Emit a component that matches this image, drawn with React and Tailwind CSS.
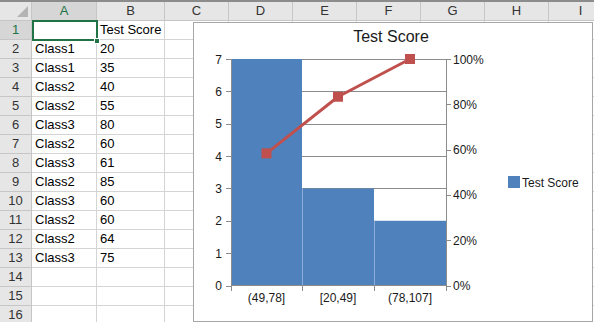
import React from "react";

const rows = [
  ["", "Test Score"],
  ["Class1", "20"],
  ["Class1", "35"],
  ["Class2", "40"],
  ["Class2", "55"],
  ["Class3", "80"],
  ["Class2", "60"],
  ["Class3", "61"],
  ["Class2", "85"],
  ["Class3", "60"],
  ["Class2", "60"],
  ["Class2", "64"],
  ["Class3", "75"],
  ["", ""],
  ["", ""],
  ["", ""],
];

const cols = ["A", "B", "C", "D", "E", "F", "G", "H", "I"];
const widths = ["w-[65px]", "w-[68px]", "w-[64px]", "w-[64px]", "w-[64px]", "w-[64px]", "w-[64px]", "w-[64px]", "w-[64px]"];

const Y0 = 285.5;
const UNIT = 226.5 / 7;
const yv = (v) => Y0 - v * UNIT;
const yp = (p) => Y0 - (p / 100) * 226.5;

function Chart() {
  const bars = [
    { x0: 231, x1: 302, v: 7, label: "(49,78]" },
    { x0: 302, x1: 374, v: 3, label: "[20,49]" },
    { x0: 374, x1: 446, v: 2, label: "(78,107]" },
  ];
  const pts = [
    [266.5, yp((7 / 12) * 100)],
    [338, yp((10 / 12) * 100)],
    [410, yp(100)],
  ];
  const font = "'Liberation Sans', Arial, sans-serif";
  return (
    <div className="absolute left-[193px] top-[22px] w-[400px] h-[300px] border border-[#a6a6a6] bg-white">
      <svg width="398" height="298" className="block">
        <g transform="translate(-194,-23)" fontFamily={font}>
          <text x="391" y="42" fontSize="16" textAnchor="middle" fill="#1a1a1a">Test Score</text>
          {[1, 2, 3, 4, 5, 6, 7].map((k) => (
            <line key={k} x1="231" x2="446" y1={Math.round(yv(k)) + 0.5} y2={Math.round(yv(k)) + 0.5} stroke="#8c8c8c" />
          ))}
          {bars.map((b, i) => (
            <rect key={i} x={b.x0} y={yv(b.v)} width={b.x1 - b.x0} height={Y0 - yv(b.v)} fill="#4f81bd" />
          ))}
          <line x1="302.5" x2="302.5" y1={yv(3)} y2={Y0} stroke="#8eaad6" />
          <line x1="374.5" x2="374.5" y1={yv(2)} y2={Y0} stroke="#8eaad6" />
          <line x1="231.5" x2="231.5" y1="59" y2="286" stroke="#8c8c8c" />
          <line x1="446.5" x2="446.5" y1="59" y2="286" stroke="#8c8c8c" />
          <line x1="231" x2="447" y1="285.5" y2="285.5" stroke="#8c8c8c" />
          {[0, 1, 2, 3, 4, 5, 6, 7].map((k) => (
            <g key={k}>
              <line x1="226" x2="231" y1={Math.round(yv(k)) + 0.5} y2={Math.round(yv(k)) + 0.5} stroke="#8c8c8c" />
              <text x="222" y={yv(k) + 4.5} fontSize="12" textAnchor="end" fill="#1a1a1a">{k}</text>
            </g>
          ))}
          {[0, 20, 40, 60, 80, 100].map((p) => (
            <g key={p}>
              <line x1="446" x2="451" y1={Math.round(yp(p)) + 0.5} y2={Math.round(yp(p)) + 0.5} stroke="#8c8c8c" />
              <text x="453" y={yp(p) + 4.5} fontSize="12" fill="#1a1a1a">{p}%</text>
            </g>
          ))}
          {[231.5, 302.5, 374.5, 446.5].map((x) => (
            <line key={x} x1={x} x2={x} y1="285" y2="291" stroke="#8c8c8c" />
          ))}
          {bars.map((b, i) => (
            <text key={i} x={(b.x0 + b.x1) / 2} y="302" fontSize="12" textAnchor="middle" fill="#1a1a1a">{b.label}</text>
          ))}
          <polyline points={pts.map((p) => p.join(",")).join(" ")} fill="none" stroke="#c0504d" strokeWidth="3" strokeLinejoin="round" />
          {pts.map((p, i) => (
            <rect key={i} x={p[0] - 5} y={p[1] - 5} width="10" height="10" fill="#c0504d" />
          ))}
          <rect x="508" y="176" width="12" height="12" fill="#4f81bd" />
          <text x="522" y="187" fontSize="12" fill="#1a1a1a">Test Score</text>
        </g>
      </svg>
    </div>
  );
}

export default function App() {
  return (
    <div className="relative w-[594px] h-[322px] overflow-hidden bg-white font-['Liberation_Sans',Arial,sans-serif] text-[13px] text-black">
      <div className="h-[2px] bg-[#8c8c8c]" />
      <div className="flex h-[19px] bg-[#e6e6e6] border-b border-[#c6c6c6]">
        <div className="relative w-[32px] shrink-0 border-r border-[#c6c6c6]">
          <div className="absolute right-[3px] bottom-[3px] w-0 h-0 border-l-[11px] border-l-transparent border-b-[11px] border-b-[#b4b4b4]" />
        </div>
        {cols.map((c, i) => (
          <div
            key={c}
            className={`${widths[i]} shrink-0 flex items-center justify-center border-r border-[#c6c6c6] ${i === 0 ? "bg-[#d6d6d6] text-[#217346]" : "text-[#333]"}`}
          >
            {c}
          </div>
        ))}
      </div>
      {rows.map((r, ri) => (
        <div key={ri} className="flex h-[19px]">
          <div className={`w-[32px] shrink-0 flex items-center justify-center border-r border-b border-[#c6c6c6] ${ri === 0 ? "bg-[#d6d6d6] text-[#217346]" : "bg-[#e6e6e6] text-[#333]"}`}>
            {ri + 1}
          </div>
          {cols.map((c, ci) => (
            <div
              key={c}
              className={`${widths[ci]} shrink-0 flex items-center px-[3px] border-r border-b border-[#d4d4d4] whitespace-nowrap overflow-visible`}
            >
              {ci < 2 ? r[ci] : ""}
            </div>
          ))}
        </div>
      ))}
      <div className="absolute left-[32px] top-[20px] w-[66px] h-[21px] border-2 border-[#217346]" />
      <div className="absolute left-[94px] top-[38px] w-[6px] h-[6px] bg-[#217346] border border-white" />
      <Chart />
    </div>
  );
}
